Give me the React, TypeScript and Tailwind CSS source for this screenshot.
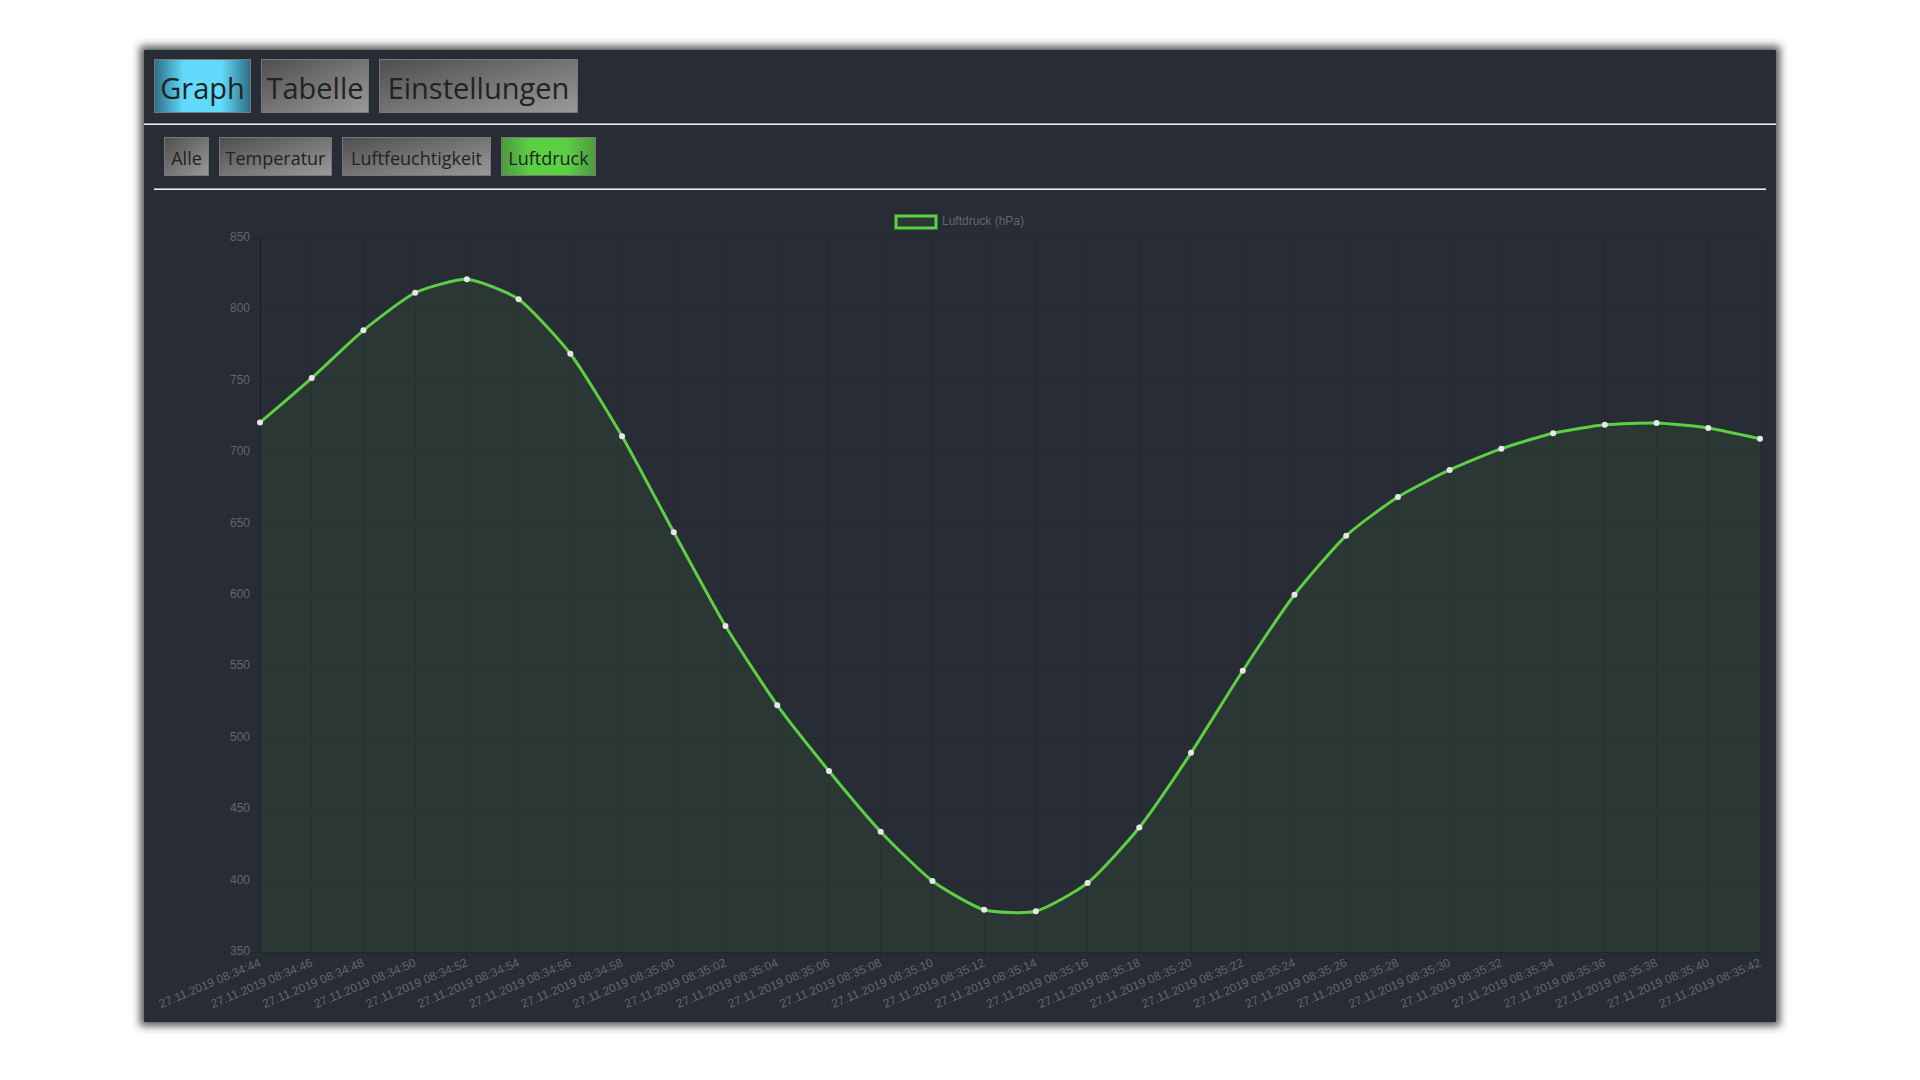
import { clsx } from "clsx";

const tabs = [
  { label: "Graph", width: "w-[97px]", active: true },
  { label: "Tabelle", width: "w-[108px]", active: false },
  { label: "Einstellungen", width: "w-[199px]", active: false },
];

const filters = [
  { label: "Alle", width: "w-[45px]", active: false },
  { label: "Temperatur", width: "w-[113px]", active: false },
  { label: "Luftfeuchtigkeit", width: "w-[149px]", active: false },
  { label: "Luftdruck", width: "w-[95px]", active: true },
];

const values = [
  721.1, 752.3, 785.7, 812, 821.4, 807.5, 769.3, 711.6, 644.3, 578.6, 523.2, 477.1, 434.6, 400.1, 379.9,
  378.9, 398.7, 437.5, 489.8, 547.3, 600.5, 641.9, 669, 687.9, 702.8, 713.6, 719.5, 720.8, 717.3, 709.8,
];

const ticks = [850, 800, 750, 700, 650, 600, 550, 500, 450, 400, 350];

const LEFT = 106;
const RIGHT = 1606;
const TOP = 32.5;
const BOTTOM = 746.5;

type Point = { x: number; y: number };

const xAt = (i: number) => LEFT + (i * (RIGHT - LEFT)) / (values.length - 1);
const yAt = (v: number) => TOP + ((850 - v) / 500) * (BOTTOM - TOP);
const snap = (n: number) => Math.floor(n) + 0.5;

const points: Point[] = values.map((v, i) => ({ x: xAt(i), y: yAt(v) }));

const TENSION = 0.2;

function controls(i: number) {
  const cur = points[i];
  const prev = points[i - 1] ?? cur;
  const next = points[i + 1] ?? cur;
  const d01 = Math.hypot(cur.x - prev.x, cur.y - prev.y);
  const d12 = Math.hypot(next.x - cur.x, next.y - cur.y);
  const fa = (TENSION * d01) / (d01 + d12);
  const fb = (TENSION * d12) / (d01 + d12);
  return {
    before: { x: cur.x - fa * (next.x - prev.x), y: cur.y - fa * (next.y - prev.y) },
    after: { x: cur.x + fb * (next.x - prev.x), y: cur.y + fb * (next.y - prev.y) },
  };
}

const linePath = points
  .map((p, i) => {
    if (i === 0) return `M${p.x} ${p.y}`;
    const a = controls(i - 1).after;
    const b = controls(i).before;
    return `C${a.x} ${a.y} ${b.x} ${b.y} ${p.x} ${p.y}`;
  })
  .join(" ");

const areaPath = `${linePath} L${RIGHT} ${BOTTOM} L${LEFT} ${BOTTOM} Z`;

function timeLabel(i: number) {
  const seconds = 44 + i * 2;
  const minute = 34 + Math.floor(seconds / 60);
  return `27.11.2019 08:${minute}:${String(seconds % 60).padStart(2, "0")}`;
}

function PressureChart() {
  return (
    <svg
      viewBox="0 0 1612 806"
      className="block h-auto w-full font-['Liberation_Sans',Arial,sans-serif] text-[12px]"
      role="img"
      aria-label="Luftdruck (hPa)"
    >
      <g stroke="#000" strokeOpacity="0.1">
        {ticks.map((t) => (
          <line key={t} x1={LEFT - 10} x2={RIGHT} y1={snap(yAt(t))} y2={snap(yAt(t))} />
        ))}
        {values.map((_, i) => (
          <line key={i} x1={snap(xAt(i))} x2={snap(xAt(i))} y1={TOP} y2={BOTTOM + 10} />
        ))}
        <line x1={LEFT} x2={RIGHT} y1={BOTTOM} y2={BOTTOM} />
        <line x1={snap(LEFT)} x2={snap(LEFT)} y1={TOP} y2={BOTTOM} strokeOpacity="0.25" />
      </g>
      <path d={areaPath} fill="#5ccf44" fillOpacity="0.07" />
      <path d={linePath} fill="none" stroke="#5ccf44" strokeWidth="3" />
      {points.map((p, i) => (
        <circle key={i} cx={p.x} cy={p.y} r="3" fill="#e8e6e8" />
      ))}
      <rect x="742" y="10" width="40" height="12" fill="#5ccf44" fillOpacity="0.07" stroke="#5ccf44" strokeWidth="3" />
      <g fill="#666">
        <text x="788" y="19">Luftdruck (hPa)</text>
        {ticks.map((t) => (
          <text key={t} x="96" y={Math.floor(yAt(t)) + 3} textAnchor="end">
            {t}
          </text>
        ))}
        {values.map((_, i) => (
          <text key={i} textAnchor="end" y="4" transform={`translate(${xAt(i)} 756) rotate(-23)`}>
            {timeLabel(i)}
          </text>
        ))}
      </g>
    </svg>
  );
}

export default function App() {
  return (
    <div className="min-h-screen bg-white py-[50px] font-['Open_Sans','Noto_Sans',sans-serif] text-[#222]">
      <main className="mx-auto w-[85%] bg-[#282c34] shadow-[0_0_8px_4px_#555]">
        <nav className="flex gap-[10px] px-[10px] pt-[9px] pb-[10px]">
          {tabs.map((t) => (
            <button
              key={t.label}
              type="button"
              className={clsx(
                "h-[54px] border border-[#777] pt-[3px] text-center text-[29px] whitespace-nowrap",
                t.width,
                t.active
                  ? "bg-[linear-gradient(to_right,#2f7088,#61dafb_30%,#61dafb_70%,#2f7088)]"
                  : "bg-[linear-gradient(to_bottom_right,#4f4f4f,#999)]",
              )}
            >
              {t.label}
            </button>
          ))}
        </nav>
        <hr className="h-[2px] border-t border-b border-t-[#9a9a9a] border-b-[#eee]" />
        <section className="px-[10px] pb-[10px]">
          <div className="flex gap-[10px] px-[10px] pt-3 pb-3">
            {filters.map((f) => (
              <button
                key={f.label}
                type="button"
                className={clsx(
                  "h-[39px] border border-[#777] pt-[3px] text-center text-[18px] whitespace-nowrap",
                  f.width,
                  f.active
                    ? "bg-[linear-gradient(to_right,#4c9a3e,#5ccf44_30%,#5ccf44_70%,#4c9a3e)]"
                    : "bg-[linear-gradient(to_bottom_right,#4f4f4f,#999)]",
                )}
              >
                {f.label}
              </button>
            ))}
          </div>
          <hr className="mb-4 h-[2px] border-t border-b border-t-[#9a9a9a] border-b-[#eee]" />
          <PressureChart />
        </section>
      </main>
    </div>
  );
}
